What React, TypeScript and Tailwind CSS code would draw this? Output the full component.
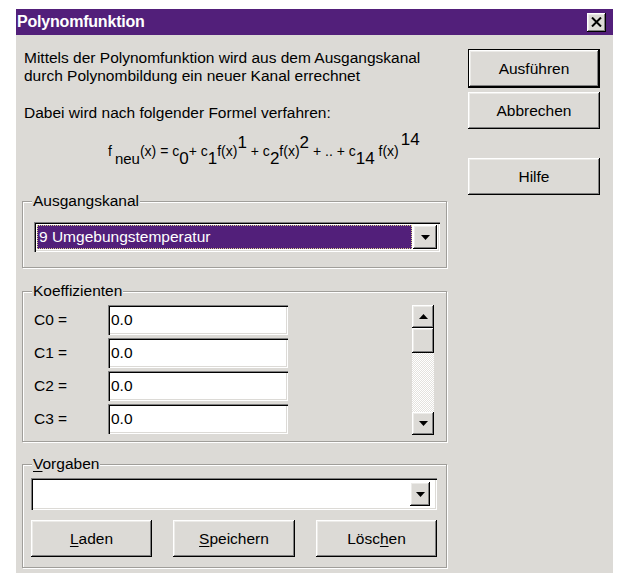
import React from "react";

const raised =
  "bg-[#dcdad6] shadow-[inset_-1px_-1px_0_#000,inset_1px_1px_0_#fff,inset_-2px_-2px_0_#808080,inset_2px_2px_0_#ecebe8]";
const sunken =
  "bg-white shadow-[inset_1px_1px_0_#808080,inset_2px_2px_0_#000,inset_-1px_-1px_0_#fff,inset_-2px_-2px_0_#dcdad6]";

function Tri({ up = false }: { up?: boolean }) {
  return (
    <svg width="9" height="5" viewBox="0 0 9 5">
      {up ? <path d="M0 5h9L4.5 0z" fill="#000" /> : <path d="M0 0h9L4.5 5z" fill="#000" />}
    </svg>
  );
}

function Group({
  label,
  className,
  children,
}: {
  label: React.ReactNode;
  className: string;
  children: React.ReactNode;
}) {
  return (
    <div
      className={`relative border border-[#a09e9a] shadow-[inset_1px_1px_0_#fff,1px_1px_0_#fff] ${className}`}
    >
      <span className="absolute left-[9px] top-[-10px] bg-[#dcdad6] px-px leading-[18px]">{label}</span>
      {children}
    </div>
  );
}

function Button({ children, className = "" }: { children: React.ReactNode; className?: string }) {
  return <div className={`${raised} flex items-center justify-center h-[37px] ${className}`}>{children}</div>;
}

function Field() {
  return (
    <div className={`${sunken} w-[180px] h-[30px] flex items-center pl-[3px]`}>
      <span>0.0</span>
    </div>
  );
}

export default function App() {
  const rows = ["C0 =", "C1 =", "C2 =", "C3 ="];
  return (
    <div className="w-[621px] h-[573px] bg-white overflow-hidden font-['Liberation_Sans',Arial,sans-serif] text-[15.5px] text-black">
      <div className="ml-[16px] mt-[9px] w-[597px] h-[564px] bg-[#dcdad6]">
        {/* caption */}
        <div className="h-[26px] bg-[#521f7a] flex items-center justify-between pl-px pr-[7px]">
          <span className="text-white font-bold text-[16px] tracking-[-0.2px]">Polynomfunktion</span>
          <div className={`${raised} w-[19px] h-[19px] flex items-center justify-center`}>
            <svg width="11" height="10" viewBox="0 0 11 10">
              <path d="M1 0.5l9 9M10 0.5l-9 9" stroke="#000" strokeWidth="2" />
            </svg>
          </div>
        </div>

        <div className="flex">
          {/* left column */}
          <div className="ml-[6px] w-[425px]">
            <div className="pl-[2px] pt-[14px] leading-[18px]">
              <p>Mittels der Polynomfunktion wird aus dem Ausgangskanal</p>
              <p>durch Polynombildung ein neuer Kanal errechnet</p>
              <p className="mt-[19px]">Dabei wird nach folgender Formel verfahren:</p>
            </div>

            {/* formula */}
            <div className="h-[79px] pt-[20px] pl-[86px] text-[14px] leading-[16px] whitespace-pre">
              <span>f</span>
              <span className="relative top-[8px] ml-[3px] text-[15px] leading-none">neu</span>
              <span>(x) = c</span>
              <span className="relative top-[8px] text-[17px] leading-none">0</span>
              <span>+ c</span>
              <span className="relative top-[8px] text-[17px] leading-none">1</span>
              <span>f(x)</span>
              <span className="relative top-[-8px] text-[17px] leading-none">1</span>
              <span> + c</span>
              <span className="relative top-[8px] text-[17px] leading-none">2</span>
              <span>f(x)</span>
              <span className="relative top-[-8px] text-[17px] leading-none">2</span>
              <span> + .. + c</span>
              <span className="relative top-[8px] text-[17px] leading-none">14</span>
              <span> f(x)</span>
              <span className="relative top-[-11px] ml-[2px] text-[17px] leading-none">14</span>
            </div>

            <Group label="Ausgangskanal" className="h-[67px] pt-[20px] pl-[11px]">
              <div className={`${sunken} w-[406px] h-[30px] flex items-center p-[3px]`}>
                <div className="flex-1 h-[24px] bg-[#521f7a] border border-dotted border-[#d8d08a] text-white flex items-center pl-[1px]">
                  9 Umgebungstemperatur
                </div>
                <div className={`${raised} w-[24px] h-[24px] ml-px flex items-center justify-center`}>
                  <Tri />
                </div>
              </div>
            </Group>

            <Group label="Koeffizienten" className="mt-[23px] h-[151px] pt-[13px] pl-[11px] pr-[12px] flex">
              <div className="flex flex-col gap-[3px]">
                {rows.map((r) => (
                  <div key={r} className="flex items-center">
                    <span className="w-[74px]">{r}</span>
                    <Field />
                  </div>
                ))}
              </div>
              <div className="ml-auto w-[22px] h-[130px] flex flex-col">
                <div className={`${raised} h-[23px] flex items-center justify-center`}>
                  <Tri up />
                </div>
                <div className={`${raised} h-[25px]`} />
                <div className="flex-1 bg-[repeating-conic-gradient(#ffffff_0%_25%,#e4e2de_0%_50%)] bg-[length:2px_2px]" />
                <div className={`${raised} h-[23px] flex items-center justify-center`}>
                  <Tri />
                </div>
              </div>
            </Group>

            <Group
              label={
                <>
                  <span className="underline underline-offset-2">V</span>orgaben
                </>
              }
              className="mt-[22px] h-[104px] pt-[13px] pl-[8px]"
            >
              <div className={`${sunken} w-[406px] h-[32px] flex items-center justify-end p-[3px]`}>
                <div className={`${raised} w-[20px] h-[24px] mr-[4px] flex items-center justify-center`}>
                  <Tri />
                </div>
              </div>
              <div className="flex mt-[10px]">
                <Button className="w-[121px]">
                  <span>
                    <span className="underline underline-offset-2">L</span>aden
                  </span>
                </Button>
                <Button className="w-[122px] ml-[21px]">
                  <span>
                    <span className="underline underline-offset-2">S</span>peichern
                  </span>
                </Button>
                <Button className="w-[121px] ml-[21px]">
                  <span>
                    Lösc<span className="underline underline-offset-2">h</span>en
                  </span>
                </Button>
              </div>
            </Group>
          </div>

          {/* right column */}
          <div className="ml-[21px] w-[132px] pt-[14px] flex flex-col">
            <div className="border border-black">
              <Button className="h-[35px]">Ausführen</Button>
            </div>
            <Button className="mt-[4px]">Abbrechen</Button>
            <Button className="mt-[29px]">Hilfe</Button>
          </div>
        </div>
      </div>
    </div>
  );
}
